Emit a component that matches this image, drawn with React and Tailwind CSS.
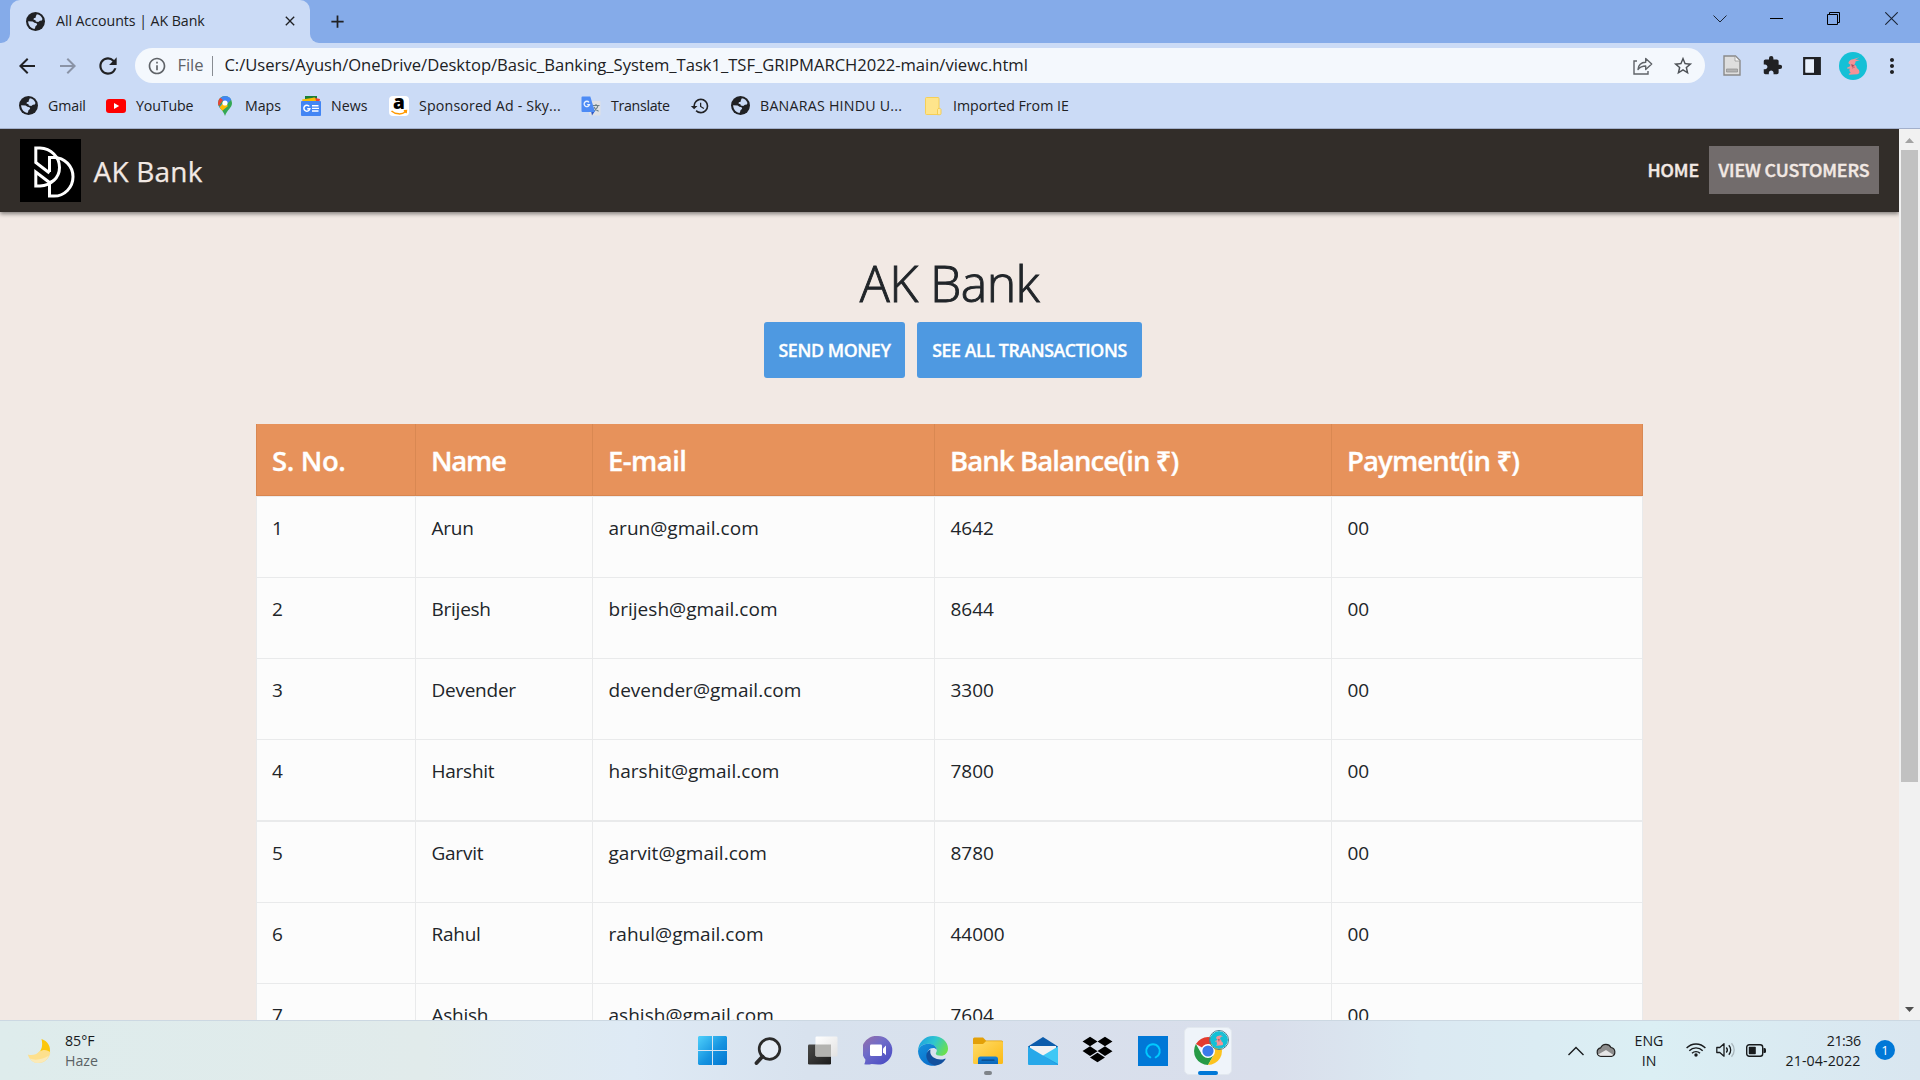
import React from "react";
import {
  MdInfoOutline,
  MdExtension,
  MdHistory,
  MdArrowBack,
  MdArrowForward,
  MdRefresh,
  MdStarBorder,
  MdMoreVert,
  MdClose,
  MdAdd,
} from "react-icons/md";
import { FaDropbox } from "react-icons/fa";

/* ---------- Shared drawings ---------- */

function RabbitAvatar({ className }) {
  return (
    <svg viewBox="0 0 28 28" className={className}>
      <circle cx="14" cy="14" r="14" fill="#14c0d6" />
      <path d="M9.500 10.500c.5-2 2.500-3.300 4.500-3.300l6.500-2-4.300 2.600 4.800.2-4.600 1.400c.3 1.300-.3 2.400-1.400 3 2 .6 2.900 2 2.700 3.600 2.200 1.200 3.200 3.200 2.500 5.300l-1.700.9-8.200.6-.8-.9 2.200-1.100c-1.300-1.200-1.600-2.800-.9-4.300l-2.300.3-.5-1.100 3-1.500.4-1.600c-1.200-.3-2.100-1.100-1.900-2.100z" fill="#f59296" />
      <path d="M12.500 12.500l2.800 1-2 1.600zM13 16.200l3-1.200" fill="#9d4454" stroke="#b95763" strokeWidth=".6" />
    </svg>
  );
}

function GlobeIcon() {
  return (
    <svg viewBox="0 0 18 18" className="mx-[1px] size-[19px] shrink-0">
      <circle cx="9" cy="9" r="9" fill="#202124" />
      <path d="M10.300 2.200c2.600.4 4.500 2.200 5.300 4.500l-.6 1.300-1.800.2-1.600 1.300-2.300-.6-.5-1.400-1.600-.2.2-1.400 1.700-.5.300-1.500z" fill="#cbdbf6" />
      <path d="M2 8.700l4.300.3 1.700 1.300 2 .3.600 1.500-1.600 1.300-.6 2.500c-3.500-.2-6.200-3-6.400-7.200z" fill="#cbdbf6" />
    </svg>
  );
}

/* ---------- Browser chrome ---------- */

function TitleBar() {
  return (
    <div className="flex h-[43px] shrink-0 bg-[#85abe9] text-[#202124]">
      <div className="flex h-[43px] w-[10px] items-end bg-[#cbdbf6]">
        <div className="h-full w-full rounded-br-[9px] bg-[#85abe9]" />
      </div>
      <div className="flex h-[43px] w-[300px] items-center rounded-t-[10px] bg-[#cbdbf6] pl-[15px] pr-[12px] pb-[1px]">
        <GlobeIcon />
        <span className="ml-[10px] text-[14.2px] tracking-[-0.05px]">All Accounts | AK Bank</span>
        <MdClose className="ml-auto size-[16px]" />
      </div>
      <div className="h-[43px] w-[10px] bg-[#cbdbf6]">
        <div className="h-full w-full rounded-bl-[9px] bg-[#85abe9]" />
      </div>
      <div className="flex items-center pl-[7px]">
        <MdAdd className="size-[21px]" />
      </div>
      <div className="ml-auto flex h-[37px] items-center pr-[22px]">
        <svg viewBox="0 0 14 14" className="size-[14px]" fill="none" stroke="#1b2536">
          <path d="M.5 3.500l6.500 6.500 6.500-6.500" />
        </svg>
        <svg viewBox="0 0 13 13" className="ml-[43px] size-[13px]" fill="none" stroke="#000">
          <path d="M0 6.500h13" />
        </svg>
        <svg viewBox="0 0 13 13" className="ml-[44px] size-[13px]" fill="none" stroke="#000">
          <path d="M.5 2.500h10v10h-10zM2.500 2.500v-2h10v10h-2" />
        </svg>
        <svg viewBox="0 0 13 13" className="ml-[45px] size-[13px]" fill="none" stroke="#1b2536" strokeWidth="1.100">
          <path d="M.3.3l12.400 12.400M12.700.3L.3 12.700" />
        </svg>
      </div>
    </div>
  );
}

function AddressBar() {
  return (
    <div className="flex h-[45px] shrink-0 items-center pl-[15px] pr-[15px] text-[#202124]">
      <MdArrowBack className="size-[24px]" />
      <MdArrowForward className="ml-[17px] size-[24px] text-[#8a93a6]" />
      <MdRefresh className="ml-[15px] size-[26px]" />
      <div className="ml-[14px] flex h-[35px] w-[1570px] items-center rounded-full bg-[#f4f8fd] pl-[12px] pr-[11px]">
        <MdInfoOutline className="size-[20px] text-[#5f6368]" />
        <span className="ml-[10.500px] text-[16.6px] tracking-[-0.1px] text-[#5f6368]">File</span>
        <span className="ml-[9px] h-[20px] w-px bg-[#888c92]" />
        <span className="ml-[11px] text-[16.6px] tracking-[-0.02px]">
          C:/Users/Ayush/OneDrive/Desktop/Basic_Banking_System_Task1_TSF_GRIPMARCH2022-main/viewc.html
        </span>
        <svg viewBox="0 0 20 18" className="ml-auto h-[18px] w-[20px]" fill="none" stroke="#5f6368" strokeWidth="1.400">
          <path d="M4 4H1v13h14v-3" />
          <path d="M5 12.500c.4-4.500 3.200-7 7.700-7.200V1.500l6 5.500-6 5.500V9C9.300 9 7 10 5 12.500z" strokeLinejoin="round" />
        </svg>
        <MdStarBorder className="ml-[19px] size-[22px] text-[#4d5156]" />
      </div>
      <svg viewBox="0 0 18 21" className="ml-[18px] h-[21px] w-[18px]">
        <path d="M1 1h11.500L17 5.500V20H1z" fill="#dedede" stroke="#8a8a8a" strokeWidth="1.400" />
        <path d="M12 1.500V6h4.500" fill="#f6f6f6" stroke="#999" strokeWidth=".8" />
        <path d="M3.500 14h11v3h-11z" fill="#b2b2b2" stroke="#8e8e8e" strokeWidth=".7" />
      </svg>
      <MdExtension className="ml-[21px] size-[21px]" />
      <svg viewBox="0 0 18 18" className="ml-[20px] size-[18px]">
        <path d="M1.300 1.300h15.400v15.400H1.300z" fill="none" stroke="#202124" strokeWidth="2.400" />
        <path d="M2.400 2.400H11v13.200H2.400z" fill="#e9f0fb" />
        <path d="M11 1h6v16h-6z" fill="#202124" />
      </svg>
      <RabbitAvatar className="ml-[18px] size-[28px]" />
      <MdMoreVert className="ml-[13px] size-[24px]" />
    </div>
  );
}

const YouTubeIcon = () => (
  <svg viewBox="0 0 20 14" className="h-[14px] w-[20px]">
    <rect width="20" height="14" rx="3" fill="#f00" />
    <path d="M8 4l5.200 3L8 10z" fill="#fff" />
  </svg>
);

const MapsIcon = () => (
  <svg viewBox="0 0 14 20" className="h-[20px] w-[14px]">
    <defs>
      <clipPath id="pin">
        <path d="M7 0a7 7 0 0 1 7 7c0 5-4.800 6.500-7 13C5 13.500 0 12 0 7a7 7 0 0 1 7-7z" />
      </clipPath>
    </defs>
    <g clipPath="url(#pin)">
      <path d="M0 0h14v20H0z" fill="#34a853" />
      <path d="M2 2l5-3 8 3-5 5-3 1z" fill="#4285f4" />
      <path d="M0 12L11 0l2 2L2.500 15z" fill="#4285f4" />
      <path d="M0 0l5 4-4 6-2-1z" fill="#ea4335" />
      <path d="M1 12l5-6 4 4-6 5z" fill="#fbbc04" />
    </g>
    <circle cx="7" cy="7" r="2.600" fill="#fff" />
  </svg>
);

const NewsIcon = () => (
  <svg viewBox="0 0 20 20" className="size-[20px]">
    <path d="M4 0h12v6H4z" fill="#188038" />
    <path d="M12 1.500l7 1.500-1 4h-8z" fill="#ea4335" />
    <path d="M1 3.500l13-2 1.500 5H2z" fill="#fbbc04" />
    <rect y="5" width="20" height="15" rx="1" fill="#4285f4" />
    <path d="M8.300 10.400a3 3 0 1 0 .5 2.400H6.200" fill="none" stroke="#fff" strokeWidth="1.500" />
    <path d="M11 9.800h6.500M11 12.400h7M11 15h6.500" stroke="#fff" strokeWidth="1.400" />
  </svg>
);

const AmazonIcon = () => (
  <span className="relative flex size-[20px] items-center justify-center rounded-[4px] bg-white">
    <span className="-mt-[7px] text-[19px] font-extrabold leading-none text-black">a</span>
    <svg viewBox="0 0 20 20" className="absolute inset-0 size-[20px]" fill="none" stroke="#ff9900" strokeWidth="1.500">
      <path d="M2.500 15c4 3.600 10.500 3.800 14 .7M14.800 14.700l2.600-.2-.3 2.600" />
    </svg>
  </span>
);

const TranslateIcon = () => (
  <svg viewBox="0 0 20 20" className="size-[20px]">
    <rect x="8" y="5" width="11.500" height="14.500" rx="1" fill="#dfe1e5" />
    <path d="M11.500 9.500h7M15 8v1.500M17 9.500c-.6 2.700-2.300 4.600-4.600 5.800M13 11c.8 2 2.300 3.500 4.600 4.300" fill="none" stroke="#6b8087" strokeWidth="1.100" />
    <path d="M10 15h4l-3 4.500z" fill="#3059c4" />
    <path d="M1.500.5h7.800L14 16H1.500a1 1 0 0 1-1-1V1.500a1 1 0 0 1 1-1z" fill="#4d8bf5" />
    <path d="M8 6.300a2.700 2.700 0 1 0 .5 2.300H6.200" fill="none" stroke="#e8f0fe" strokeWidth="1.300" />
  </svg>
);

const FolderBookmarkIcon = () => (
  <svg viewBox="0 0 20 20" className="size-[20px]">
    <rect x="2.500" y="1.500" width="13.500" height="17" rx="1" fill="#fee48b" stroke="#f6cf57" />
    <path d="M14.500 13.500c0-1.500 3.500-1.500 3.500 0v4a1.200 1.200 0 0 1-1.200 1.200h-2.300z" fill="#fee9a0" stroke="#f3c94c" strokeWidth=".9" />
  </svg>
);

function Bookmark({ icon, label, className }) {
  return (
    <div className={"flex shrink-0 items-center " + className}>
      <span className="flex w-[20px] shrink-0 justify-center">{icon}</span>
      {label && <span className="ml-[10px] whitespace-nowrap">{label}</span>}
    </div>
  );
}

function BookmarksBar() {
  return (
    <div className="flex h-[41px] shrink-0 border-b border-[#a3b0cb] pb-[5px] pl-[18px] text-[14.2px] text-[#202124]">
      <Bookmark className="w-[88px] tracking-[-0.15px]" icon={<GlobeIcon />} label="Gmail" />
      <Bookmark className="w-[109px] tracking-[-0.15px]" icon={<YouTubeIcon />} label="YouTube" />
      <Bookmark className="w-[86px] tracking-[-0.02px]" icon={<MapsIcon />} label="Maps" />
      <Bookmark className="w-[88px]" icon={<NewsIcon />} label="News" />
      <Bookmark className="w-[192px] tracking-[0.17px]" icon={<AmazonIcon />} label="Sponsored Ad - Sky..." />
      <Bookmark className="w-[109px] tracking-[-0.3px]" icon={<TranslateIcon />} label="Translate" />
      <Bookmark className="w-[40px]" icon={<MdHistory className="size-[20px] shrink-0" />} />
      <Bookmark className="w-[193px] tracking-[0.24px]" icon={<GlobeIcon />} label="BANARAS HINDU U..." />
      <Bookmark className="tracking-[0px]" icon={<FolderBookmarkIcon />} label="Imported From IE" />
    </div>
  );
}

/* ---------- Web page ---------- */

function BankLogo() {
  return (
    <svg viewBox="0 0 61 63" className="h-[63px] w-[61px] bg-black" fill="none" stroke="#fff" strokeWidth="3">
      <path d="M29.500 33V18.500H34a19 19.300 0 0 1 0 38.600h-4.500V43" />
      <path d="M29.500 34L15.800 23.500V9H20c11 .5 19.500 9 19.500 19.500S31 46.300 20 47h-4.200V33l13.700 10.500" />
      <path d="M29.500 43.500c2 -1.500 3.500 -1.800 5.500 -3.500" strokeWidth="2" />
    </svg>
  );
}

function SiteHeader() {
  return (
    <header className="z-10 flex h-[83px] shrink-0 items-center bg-[#322d29] pl-[20px] pr-[20px] text-[#f2e9e4] shadow-[0_2px_4px_rgba(0,0,0,0.45)]">
      <BankLogo />
      <span className="ml-[12.500px] mt-[1px] text-[28px] tracking-[0.2px] [-webkit-text-stroke:0.25px]">AK Bank</span>
      <nav className="mb-[2px] ml-auto flex items-center text-[17.8px] font-medium font-['Noto_Sans_CJK_SC','Noto_Sans',sans-serif] [-webkit-text-stroke:0.45px]">
        <a className="px-[10px] tracking-[-0.1px]">HOME</a>
        <a className="flex h-[48px] w-[170px] items-center justify-center whitespace-nowrap bg-[#726c6c] tracking-[-0.12px]">VIEW CUSTOMERS</a>
      </nav>
    </header>
  );
}

const CUSTOMERS = [
  ["1", "Arun", "arun@gmail.com", "4642", "h-[81px] border-b"],
  ["2", "Brijesh", "brijesh@gmail.com", "8644", "h-[81px] border-b"],
  ["3", "Devender", "devender@gmail.com", "3300", "h-[81px] border-b"],
  ["4", "Harshit", "harshit@gmail.com", "7800", "h-[82px] border-b-2"],
  ["5", "Garvit", "garvit@gmail.com", "8780", "h-[81px] border-b"],
  ["6", "Rahul", "rahul@gmail.com", "44000", "h-[81px] border-b"],
  ["7", "Ashish", "ashish@gmail.com", "7604", "h-[81px] border-b"],
];

function CustomerTable() {
  return (
    <div className="mx-auto mt-[46px] w-[1387px] shrink-0">
      <div className="grid h-[72px] grid-cols-[160px_177px_342px_397px_311px] border-b border-[#d88650] bg-[#e7925b] text-[27.500px] font-semibold text-white [-webkit-text-stroke:0.3px]">
        <div className="flex items-center border-x border-[#d98852] pl-[15px] pt-[2px] tracking-[-0.35px]">S. No.</div>
        <div className="flex items-center border-r border-[#d98852] pl-[15px] pt-[2px] tracking-[-1.250px]">Name</div>
        <div className="flex items-center border-r border-[#d98852] pl-[15px] pt-[2px] tracking-[-0.55px]">E-mail</div>
        <div className="flex items-center border-r border-[#d98852] pl-[15px] pt-[2px] tracking-[-0.9px]">Bank Balance(in ₹)</div>
        <div className="flex items-center border-r border-[#d98852] pl-[15px] pt-[2px] tracking-[-0.87px]">Payment(in ₹)</div>
      </div>
      <div className="border-t border-[#ecebec]">
        {CUSTOMERS.map(([no, name, email, balance, rowClass]) => (
          <div
            key={no}
            className={
              "grid grid-cols-[160px_177px_342px_397px_311px] border-[#e9eaeb] bg-[#fcfcfc] text-[19px] leading-[30px] text-[#212529] " +
              rowClass
            }
          >
            <div className="border-x border-[#e9eaeb] pl-[15px] pt-[16px]">{no}</div>
            <div className="border-r border-[#e9eaeb] pl-[15.500px] pt-[16px] tracking-[-0.25px]">{name}</div>
            <div className="border-r border-[#e9eaeb] pl-[15.500px] pt-[16px] tracking-[0.03px]">{email}</div>
            <div className="border-r border-[#e9eaeb] pl-[15.500px] pt-[16px] tracking-[-0.05px]">{balance}</div>
            <div className="border-r border-[#e9eaeb] pl-[15.500px] pt-[16px] tracking-[-0.05px]">00</div>
          </div>
        ))}
      </div>
    </div>
  );
}

function Scrollbar() {
  return (
    <div className="flex w-[21px] shrink-0 flex-col items-center bg-[#f1f1f1]">
      <svg viewBox="0 0 21 21" className="h-[21px] w-[21px] shrink-0">
        <path d="M6 14h9l-4.500-5z" fill="#a3a3a3" />
      </svg>
      <div className="h-[632px] w-[17px] shrink-0 bg-[#c1c1c1]" />
      <svg viewBox="0 0 21 21" className="mt-auto h-[21px] w-[21px] shrink-0">
        <path d="M6 8h9l-4.500 5z" fill="#505050" />
      </svg>
    </div>
  );
}

function WebPage() {
  return (
    <div className="flex min-h-0 flex-1">
      <div className="flex min-w-0 flex-1 flex-col overflow-hidden bg-[#f2e9e4]">
        <SiteHeader />
        <h1 className="mt-[41px] h-[60px] shrink-0 text-center text-[50px] font-light leading-[60px] tracking-[-0.6px] text-[#212529] [-webkit-text-stroke:0.9px]">
          AK Bank
        </h1>
        <div className="mt-[9px] flex shrink-0 justify-center gap-[12px] pl-[7px] text-[17.8px] font-semibold text-white [-webkit-text-stroke:0.3px]">
          <button className="h-[56px] w-[141px] whitespace-nowrap rounded-[3px] bg-[#4e99e1] tracking-[-0.4px]">SEND MONEY</button>
          <button className="h-[56px] w-[225px] whitespace-nowrap rounded-[3px] bg-[#4e99e1] tracking-[-0.42px]">SEE ALL TRANSACTIONS</button>
        </div>
        <CustomerTable />
      </div>
      <Scrollbar />
    </div>
  );
}

/* ---------- Taskbar ---------- */

const WindowsIcon = () => (
  <svg viewBox="0 0 29 29" className="size-[29px]">
    <defs>
      <linearGradient id="win" x1="0" y1="0" x2="1" y2="1" gradientUnits="objectBoundingBox">
        <stop offset="0" stopColor="#4fd0fb" />
        <stop offset=".55" stopColor="#1593e0" />
        <stop offset="1" stopColor="#0275d0" />
      </linearGradient>
    </defs>
    <path d="M1 0h13v14H0V1zM15 0h13l1 1v13H15zM0 15h14v14H1l-1-1zM15 15h14v13l-1 1H15z" fill="url(#win)" />
  </svg>
);

const SearchIcon = () => (
  <svg viewBox="0 0 28 28" className="size-[28px]" fill="none" stroke="#2b2b2b">
    <circle cx="15.500" cy="12" r="10.300" strokeWidth="2.700" fill="#e6edf6" />
    <path d="M8.500 19.500L2.500 26" strokeWidth="3.800" strokeLinecap="round" />
  </svg>
);

const TaskViewIcon = () => (
  <svg viewBox="0 0 30 29" className="h-[29px] w-[30px]">
    <defs>
      <linearGradient id="tvDark" x1="0" y1="0" x2="1" y2="1">
        <stop offset="0" stopColor="#4a4a48" />
        <stop offset="1" stopColor="#1c1c1c" />
      </linearGradient>
      <linearGradient id="tvLight" x1="0" y1="0" x2="1" y2="1">
        <stop offset="0" stopColor="#fff" />
        <stop offset="1" stopColor="#e2e2e2" />
      </linearGradient>
    </defs>
    <rect y="8.500" width="23" height="20" rx="1.300" fill="url(#tvDark)" />
    <rect x="7.500" y=".5" width="22" height="20" rx="1.300" fill="url(#tvLight)" />
    <path d="M7.500 8.500H23v12H8.500l-1-1z" fill="#b3b3b0" />
  </svg>
);

const ChatIcon = () => (
  <svg viewBox="0 0 30 29" className="h-[29px] w-[30px]">
    <defs>
      <linearGradient id="chat" x1="0" y1="0" x2=".8" y2="1">
        <stop offset="0" stopColor="#9a6fa6" />
        <stop offset=".45" stopColor="#6f6cc9" />
        <stop offset="1" stopColor="#4a4cc4" />
      </linearGradient>
    </defs>
    <path d="M15 0a14.300 14.300 0 0 1 0 28.600c-2.300 0-4.300-.4-6.300-.6C6.500 28.600 4 28.600 1.200 28.300c1-1.700 1.300-3.200 1.100-5A14.300 14.300 0 0 1 15 0z" fill="url(#chat)" />
    <rect x="7" y="8.500" width="12" height="11.500" rx="1.300" fill="#fff" />
    <path d="M20 12.500l3-3v9.800l-3-3z" fill="#fff" />
  </svg>
);

const EdgeIcon = () => (
  <svg viewBox="0 0 30 30" className="size-[30px]">
    <defs>
      <linearGradient id="edgeTop" x1="0" y1=".2" x2="1" y2=".6">
        <stop offset="0" stopColor="#1c9fe2" />
        <stop offset=".5" stopColor="#2fc6cf" />
        <stop offset="1" stopColor="#6be04e" />
      </linearGradient>
      <linearGradient id="edgeLeft" x1="0" y1="0" x2=".6" y2="1">
        <stop offset="0" stopColor="#1592dd" />
        <stop offset="1" stopColor="#0a6fcb" />
      </linearGradient>
    </defs>
    <path d="M0 15A15 15 0 0 1 15 0c9 0 15 6 15 12.500 0 4.600-3.300 7.300-7 7.300-3.200 0-5.200-1-5.200-2.300 0-.9 1-1.300 1-3.300C18.800 11 15 7.800 10.500 7.800 5 7.800 1 11 0 15z" fill="url(#edgeTop)" />
    <path d="M0 15C1 11 5 7.800 10.500 7.800c4.600 0 8 2.800 8.300 6-1-1.300-2.300-1.800-3.300-1.800C11 12 9 15.500 9 19c0 5 4 9.500 9.500 10.400A15 15 0 0 1 0 15z" fill="url(#edgeLeft)" />
    <path d="M12.500 13.500C9.800 14.700 8.300 17 8.300 19.800c0 5 4.500 9.400 9.700 9.800 4-.6 7.500-3 9.500-6.300.3-.6-.2-.9-.7-.6-1.300.6-2.800.9-4.300.9-5 0-9.800-3-10.200-7 0-1.200 0-2.200.2-3.100z" fill="#12509e" />
  </svg>
);

const ExplorerIcon = () => (
  <svg viewBox="0 0 30 28" className="h-[28px] w-[30px]">
    <defs>
      <linearGradient id="folder" x1="0" y1="0" x2="1" y2="1">
        <stop offset="0" stopColor="#ffdc68" />
        <stop offset="1" stopColor="#fbb914" />
      </linearGradient>
      <linearGradient id="tray" x1="0" y1="0" x2="0" y2="1">
        <stop offset="0" stopColor="#1482d8" />
        <stop offset="1" stopColor="#0c66b8" />
      </linearGradient>
    </defs>
    <path d="M0 2a1.500 1.500 0 0 1 1.500-1.500H10L13 3.500h15.500A1.500 1.500 0 0 1 30 5v4H0z" fill="#e3a008" />
    <path d="M0 7h10l3-2.700h15.500A1.500 1.500 0 0 1 30 5.800v19.700a1.500 1.500 0 0 1-1.500 1.500h-27A1.500 1.500 0 0 1 0 25.500z" fill="url(#folder)" />
    <path d="M5 27v-5a2.500 2.500 0 0 1 2.500-2.500h15A2.500 2.500 0 0 1 25 22v5z" fill="url(#tray)" />
    <path d="M9 23.200h12" stroke="#0a4784" strokeWidth="1.200" strokeLinecap="round" />
  </svg>
);

const MailIcon = () => (
  <svg viewBox="0 0 30 28" className="h-[28px] w-[30px]">
    <path d="M0 9.500L15 0l15 9.500V14H0z" fill="#0d5cab" />
    <path d="M2 9h26v10H2z" fill="#f1f2f4" />
    <path d="M30 9.500L15 18.500 30 28z" fill="#3ec8f5" />
    <path d="M15 18.500L30 27v1H1z" fill="#1f93dc" />
    <path d="M0 9.500l15 9L30 28H1a1 1 0 0 1-1-1z" fill="#27a8e9" />
  </svg>
);

const AlexaIcon = () => (
  <svg viewBox="0 0 30 30" className="size-[30px] bg-[#0078d7]" fill="none">
    <path d="M12.300 21.300a6.800 6.800 0 1 1 5.400 0" stroke="#00caff" strokeWidth="2" strokeLinecap="round" />
  </svg>
);

const ChromeIcon = () => (
  <svg viewBox="0 0 28 28" className="size-[28px]">
    <path d="M14 14L1.900 7A14 14 0 0 1 26.100 7H14z" fill="#e33b2e" />
    <path d="M14 14l6 3.500L14 28A14 14 0 0 1 1.900 7l6 10.500z" fill="#269a46" />
    <path d="M14 7h12.100A14 14 0 0 1 14 28l6-10.500z" fill="#fcc31e" />
    <circle cx="14" cy="14" r="7" fill="#fff" />
    <circle cx="14" cy="14" r="5.600" fill="#3a7bea" />
  </svg>
);

function TaskSlot({ children, indicator }) {
  return (
    <div className="relative flex h-[59px] w-[55px] shrink-0 items-center justify-center">
      {children}
      {indicator && <span className="absolute bottom-[5px] h-[4px] w-[8px] rounded-full bg-[#7f8489]" />}
    </div>
  );
}

function Weather() {
  return (
    <div className="flex w-[685px] shrink-0 items-center pl-[27px] text-[14.2px] leading-[20px]">
      <svg viewBox="0 0 25 26" className="h-[26px] w-[25px]">
        <path d="M14.500 1c6 2 9.500 7.500 8.300 13.300-3.300 4-9 4.500-12.300 1.700 4.500-3.500 5.500-9 4-15z" fill="#fcc70a" />
        <path d="M.8 16.500c4 1.300 8.700.3 11.500-3 4-2.500 8.500-2 11 1-.8 5.500-5.500 10.500-12 10.500-5 0-8.800-3-10.500-8.500z" fill="#fde08d" />
        <path d="M3 20.500c5 2.300 13 1 19-3-2 4.500-6 7.500-11 7.500-3.500 0-6.300-1.800-8-4.500z" fill="#fbeab8" />
      </svg>
      <div className="ml-[13px]">
        <div className="text-[#16191b]">85°F</div>
        <div className="text-[#5a6265]">Haze</div>
      </div>
    </div>
  );
}

function SystemTray() {
  return (
    <div className="ml-auto flex items-center pr-[25px] text-[14.2px] leading-[20px] text-[#181b1d]">
      <svg viewBox="0 0 16 10" className="h-[10px] w-[16px]" fill="none" stroke="#181b1d" strokeWidth="1.400">
        <path d="M.5 9L8 1.500 15.500 9" />
      </svg>
      <svg viewBox="0 0 20 14" className="mb-[2px] ml-[12px] h-[14px] w-[20px]">
        <path d="M5 13.300a4.300 4.300 0 0 1-.3-8.500A5.700 5.700 0 0 1 15 4.500a4.500 4.500 0 0 1 .5 8.800z" fill="#8d8d8d" stroke="#222" strokeWidth="1.200" />
        <path d="M2 11.500l8-4.500 7.500 5-2 .8H4.500z" fill="#e6e6e6" />
      </svg>
      <div className="ml-[18px] w-[30px] text-center">
        <div>ENG</div>
        <div>IN</div>
      </div>
      <svg viewBox="0 0 20 15" className="mb-[2px] ml-[22px] h-[15px] w-[20px]" fill="none" stroke="#181b1d" strokeWidth="1.400">
        <path d="M.6 6a13 13 0 0 1 18.800 0M3.300 8.700a9.300 9.300 0 0 1 13.400 0M6 11.300a5.600 5.600 0 0 1 8 0" />
        <circle cx="10" cy="13" r="1.700" fill="#181b1d" stroke="none" />
      </svg>
      <svg viewBox="0 0 20 16" className="mb-[1px] ml-[10px] h-[16px] w-[20px]" fill="none" stroke="#181b1d" strokeWidth="1.300">
        <path d="M.8 5.500h3L8 1.800v12.400l-4.200-3.700h-3z" strokeLinejoin="round" />
        <path d="M10.300 5.500a3.800 3.800 0 0 1 0 5M12.800 3.300a6.800 6.800 0 0 1 0 9.400" />
        <path d="M15.500 1.200a10 10 0 0 1 0 13.600" stroke="#a9b6bc" />
      </svg>
      <svg viewBox="0 0 20 13" className="mb-[1px] ml-[10px] h-[13px] w-[20px]">
        <rect x=".7" y=".7" width="16" height="11.600" rx="2.500" fill="none" stroke="#181b1d" strokeWidth="1.400" />
        <rect x="2.800" y="2.800" width="7" height="7.400" rx=".6" fill="#181b1d" />
        <path d="M17.500 4h1a1.500 1.500 0 0 1 1.500 1.500v2A1.500 1.500 0 0 1 18.500 9h-1z" fill="#181b1d" />
      </svg>
      <div className="ml-[10px] w-[84.500px] text-right">
        <div className="tracking-[-0.5px]">21:36</div>
        <div className="whitespace-nowrap tracking-[0.1px]">21-04-2022</div>
      </div>
      <span className="mb-[1px] ml-[14.500px] flex size-[20px] items-center justify-center rounded-full bg-[#0078d7] text-[13px] leading-none text-white">1</span>
    </div>
  );
}

function Taskbar() {
  return (
    <div className="flex h-[60px] shrink-0 border-t border-[#ccd8e2] bg-[linear-gradient(90deg,#deecec_0%,#e1ebeb_22%,#deeaf5_33%,#d8e2ee_42%,#d9deeb_66%,#dbe9f2_74%,#dbeff4_86%,#d9e6f0_100%)]">
      <Weather />
      <TaskSlot><WindowsIcon /></TaskSlot>
      <TaskSlot><SearchIcon /></TaskSlot>
      <TaskSlot><TaskViewIcon /></TaskSlot>
      <TaskSlot><ChatIcon /></TaskSlot>
      <TaskSlot><EdgeIcon /></TaskSlot>
      <TaskSlot indicator><ExplorerIcon /></TaskSlot>
      <TaskSlot><MailIcon /></TaskSlot>
      <TaskSlot><FaDropbox className="mb-[2px] h-[29px] w-[31px] text-black" /></TaskSlot>
      <TaskSlot><AlexaIcon /></TaskSlot>
      <TaskSlot>
        <div className="relative flex h-[48px] w-[48px] items-center justify-center rounded-[5px] border border-[#e2e8ef] bg-[#eff4fa]">
          <ChromeIcon />
          <RabbitAvatar className="absolute right-[2px] top-[2px] size-[20px] rounded-full border border-[#4d7f8c]" />
          <span className="absolute bottom-[-1px] h-[4px] w-[20px] rounded-full bg-[#0078d7]" />
        </div>
      </TaskSlot>
      <SystemTray />
    </div>
  );
}

export default function App() {
  return (
    <div className="flex h-[1080px] w-[1920px] flex-col overflow-hidden bg-[#cbdbf6] font-['Open_Sans','Noto_Sans',sans-serif]">
      <TitleBar />
      <AddressBar />
      <BookmarksBar />
      <WebPage />
      <Taskbar />
    </div>
  );
}
